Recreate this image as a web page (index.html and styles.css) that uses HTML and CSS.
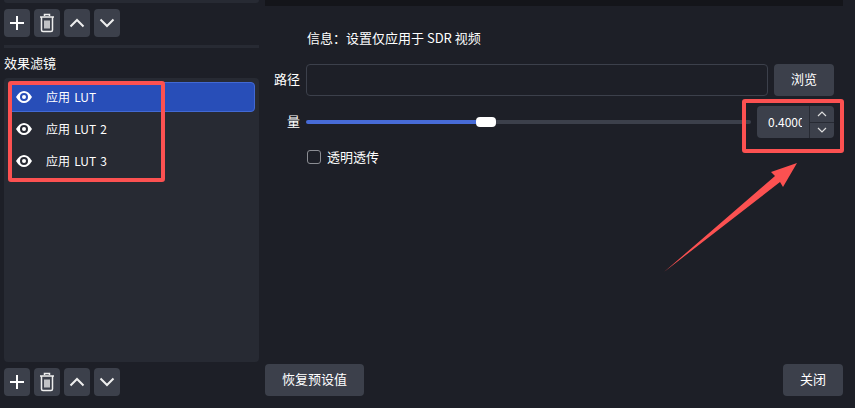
FILE: index.html
```html
<!DOCTYPE html>
<html>
<head>
<meta charset="utf-8">
<title>效果滤镜</title>
<link rel="stylesheet" href="styles.css">
</head>
<body>
<div class="dialog">
	<div class="left">
		<div class="strip"></div>
		<div class="tools">
			<button class="tool"><svg width="16" height="16" viewBox="0 0 16 16"><path d="M8 1v14M1 8h14" stroke="#fff" stroke-width="2" fill="none"/></svg></button>
			<button class="tool"><svg width="16" height="20" viewBox="0 0 16 20"><path d="M1 4h14M5.500 3V1.500h5V3M2.500 4.500v12.500q0 1.500 1.500 1.500h8q1.500 0 1.500-1.500V4.500M6 7.500v8M8 7.500v8M10 7.500v8" stroke="#eee" stroke-width="1.500" fill="none"/></svg></button>
			<button class="tool"><svg width="16" height="10" viewBox="0 0 16 10"><path d="M1.500 8.500L8 2l6.500 6.500" stroke="#eee" stroke-width="2" fill="none"/></svg></button>
			<button class="tool"><svg width="16" height="10" viewBox="0 0 16 10"><path d="M1.500 1.500L8 8l6.500-6.500" stroke="#eee" stroke-width="2" fill="none"/></svg></button>
		</div>
		<div class="sep"></div>
		<div class="title">效果滤镜</div>
		<div class="list">
			<div class="item active">
				<svg class="eye" width="16" height="12" viewBox="0 0 16 12"><path fill-rule="evenodd" fill="#fff" d="M0 6Q3.500 0 8 0t8 6q-3.500 6-8 6T0 6zM8 2a4 4 0 1 0 0 8 4 4 0 0 0 0-8z"/><circle cx="8" cy="6" r="2" fill="#fff"/></svg>
				<span class="name">应用 LUT</span>
			</div>
			<div class="item">
				<svg class="eye" width="16" height="12" viewBox="0 0 16 12"><path fill-rule="evenodd" fill="#fff" d="M0 6Q3.500 0 8 0t8 6q-3.500 6-8 6T0 6zM8 2a4 4 0 1 0 0 8 4 4 0 0 0 0-8z"/><circle cx="8" cy="6" r="2" fill="#fff"/></svg>
				<span class="name">应用 LUT 2</span>
			</div>
			<div class="item">
				<svg class="eye" width="16" height="12" viewBox="0 0 16 12"><path fill-rule="evenodd" fill="#fff" d="M0 6Q3.500 0 8 0t8 6q-3.500 6-8 6T0 6zM8 2a4 4 0 1 0 0 8 4 4 0 0 0 0-8z"/><circle cx="8" cy="6" r="2" fill="#fff"/></svg>
				<span class="name">应用 LUT 3</span>
			</div>
		</div>
		<div class="tools bottom">
			<button class="tool"><svg width="16" height="16" viewBox="0 0 16 16"><path d="M8 1v14M1 8h14" stroke="#fff" stroke-width="2" fill="none"/></svg></button>
			<button class="tool"><svg width="16" height="20" viewBox="0 0 16 20"><path d="M1 4h14M5.500 3V1.500h5V3M2.500 4.500v12.500q0 1.500 1.500 1.500h8q1.500 0 1.500-1.500V4.500M6 7.500v8M8 7.500v8M10 7.500v8" stroke="#eee" stroke-width="1.500" fill="none"/></svg></button>
			<button class="tool"><svg width="16" height="10" viewBox="0 0 16 10"><path d="M1.500 8.500L8 2l6.500 6.500" stroke="#eee" stroke-width="2" fill="none"/></svg></button>
			<button class="tool"><svg width="16" height="10" viewBox="0 0 16 10"><path d="M1.500 1.500L8 8l6.500-6.500" stroke="#eee" stroke-width="2" fill="none"/></svg></button>
		</div>
	</div>
	<div class="right">
		<div class="topbar"></div>
		<div class="info">信息：设置仅应用于 SDR 视频</div>
		<div class="row path">
			<label class="lab">路径</label>
			<div class="input"></div>
			<button class="btn browse">浏览</button>
		</div>
		<div class="row amount">
			<label class="lab">量</label>
			<div class="slider">
				<div class="fill"></div>
				<div class="handle"></div>
				<div class="rest"></div>
			</div>
			<div class="spin">
				<div class="value"><span>0.4000</span></div>
				<div class="arrows">
					<div class="arrow"><svg width="10" height="6" viewBox="0 0 10 6"><path d="M1 5l4-4 4 4" stroke="#ddd" stroke-width="1.200" fill="none"/></svg></div>
					<div class="arrow down"><svg width="10" height="6" viewBox="0 0 10 6"><path d="M1 1l4 4 4-4" stroke="#ddd" stroke-width="1.200" fill="none"/></svg></div>
				</div>
			</div>
		</div>
		<div class="check">
			<span class="box"></span>
			<span class="check-text">透明透传</span>
		</div>
		<div class="foot">
			<button class="btn reset">恢复预设值</button>
			<button class="btn close">关闭</button>
		</div>
	</div>
</div>
<svg class="marks" width="855" height="408" viewBox="0 0 855 408">
	<rect x="10" y="83" width="153" height="97" rx="1" fill="none" stroke="#fc5151" stroke-width="4"/>
	<rect x="744" y="101" width="98" height="50" rx="1" fill="none" stroke="#fc5151" stroke-width="4"/>
	<path d="M664 272L775 176l-4-4 26-9-14 24-3-5z" fill="#fc5151"/>
</svg>
</body>
</html>
```
FILE: styles.css
```css
* {padding:0; margin:0; box-sizing:border-box;}
html, body {width:855px; height:408px; overflow:hidden;}
body {background:#1d1f27; color:#fff; font:13px "Noto Sans CJK SC", "Noto Sans", sans-serif; position:relative;}
button {font:inherit; color:inherit; border:0;}

.dialog {display:flex; height:408px;}

.left {width:265px; padding:0 6px 0 4px; display:flex; flex-direction:column;}
.strip {height:3px; background:#272a33; border-radius:0 0 4px 4px; flex:none;}
.tools {display:flex; gap:4px; margin-top:6px; flex:none;}
.tool {width:26px; height:28px; background:#3c404b; border-radius:4px; display:flex; align-items:center; justify-content:center;}
.sep {height:3px; background:#272a33; margin-top:8px; flex:none;}
.title {height:30px; line-height:30px; flex:none;}
.list {height:284px; background:#272a33; border-radius:4px; padding:4px; flex:none;}
.item {height:32px; display:flex; align-items:center; padding-left:8px; gap:14px; font-size:12px; word-spacing:1.500px;}
.item.active {height:30px; margin-bottom:1px; background:#284eb8; border:1px solid #4269d3; border-radius:4px; padding-left:7px;}
.name {padding-bottom:2px;}
.eye {flex:none;}

.right {flex:1; position:relative; padding-right:12px;}
.topbar {height:6px; background:#14151a;}
.info {margin:22px 0 0 42px; height:20px; line-height:20px;}
.row {display:flex; align-items:center;}
.lab {width:35px; margin-right:6px; text-align:right; flex:none; padding-bottom:4px;}
.path {margin:16px 0 0 0; height:32px; padding-right:9px;}
.input {flex:1; height:32px; border:1px solid #3c404b; border-radius:4px;}
.btn {background:#3c404b; border-radius:4px; height:32px; padding-bottom:3px;}
.browse {width:60px; margin-left:6px;}
.amount {margin-top:10px; height:32px; padding-right:9px;}
.slider {flex:1; display:flex; align-items:center; height:10px;}
.fill {width:170px; height:4px; background:#476bd7; border-radius:2px 0 0 2px;}
.handle {width:20px; height:10px; background:#fff; border-radius:4px;}
.rest {flex:1; height:4px; background:#3c404b; border-radius:0 2px 2px 0;}
.spin {width:77px; height:32px; margin-left:6px; background:#3c404b; border-radius:4px; display:flex; flex:none;}
.value {width:53px; padding:0 0 0 11px; line-height:32px; font-size:12px; border-right:1px solid #272a33;}
.value span {display:block; width:34px; overflow:hidden;}
.arrows {flex:1; display:flex; flex-direction:column;}
.arrow {flex:1; display:flex; align-items:center; justify-content:center;}
.arrow.down {border-top:1px solid #272a33;}
.check {display:flex; align-items:center; gap:6px; margin:9px 0 0 42px; height:20px;}
.check-text {padding-bottom:2px;}
.box {width:14px; height:14px; border:1px solid #8b8d93; border-radius:3px; flex:none;}
.foot {position:absolute; left:0; right:12px; top:364px; display:flex; justify-content:space-between;}
.reset {width:99px;}
.close {width:60px;}

.marks {position:absolute; left:0; top:0; pointer-events:none;}
```
